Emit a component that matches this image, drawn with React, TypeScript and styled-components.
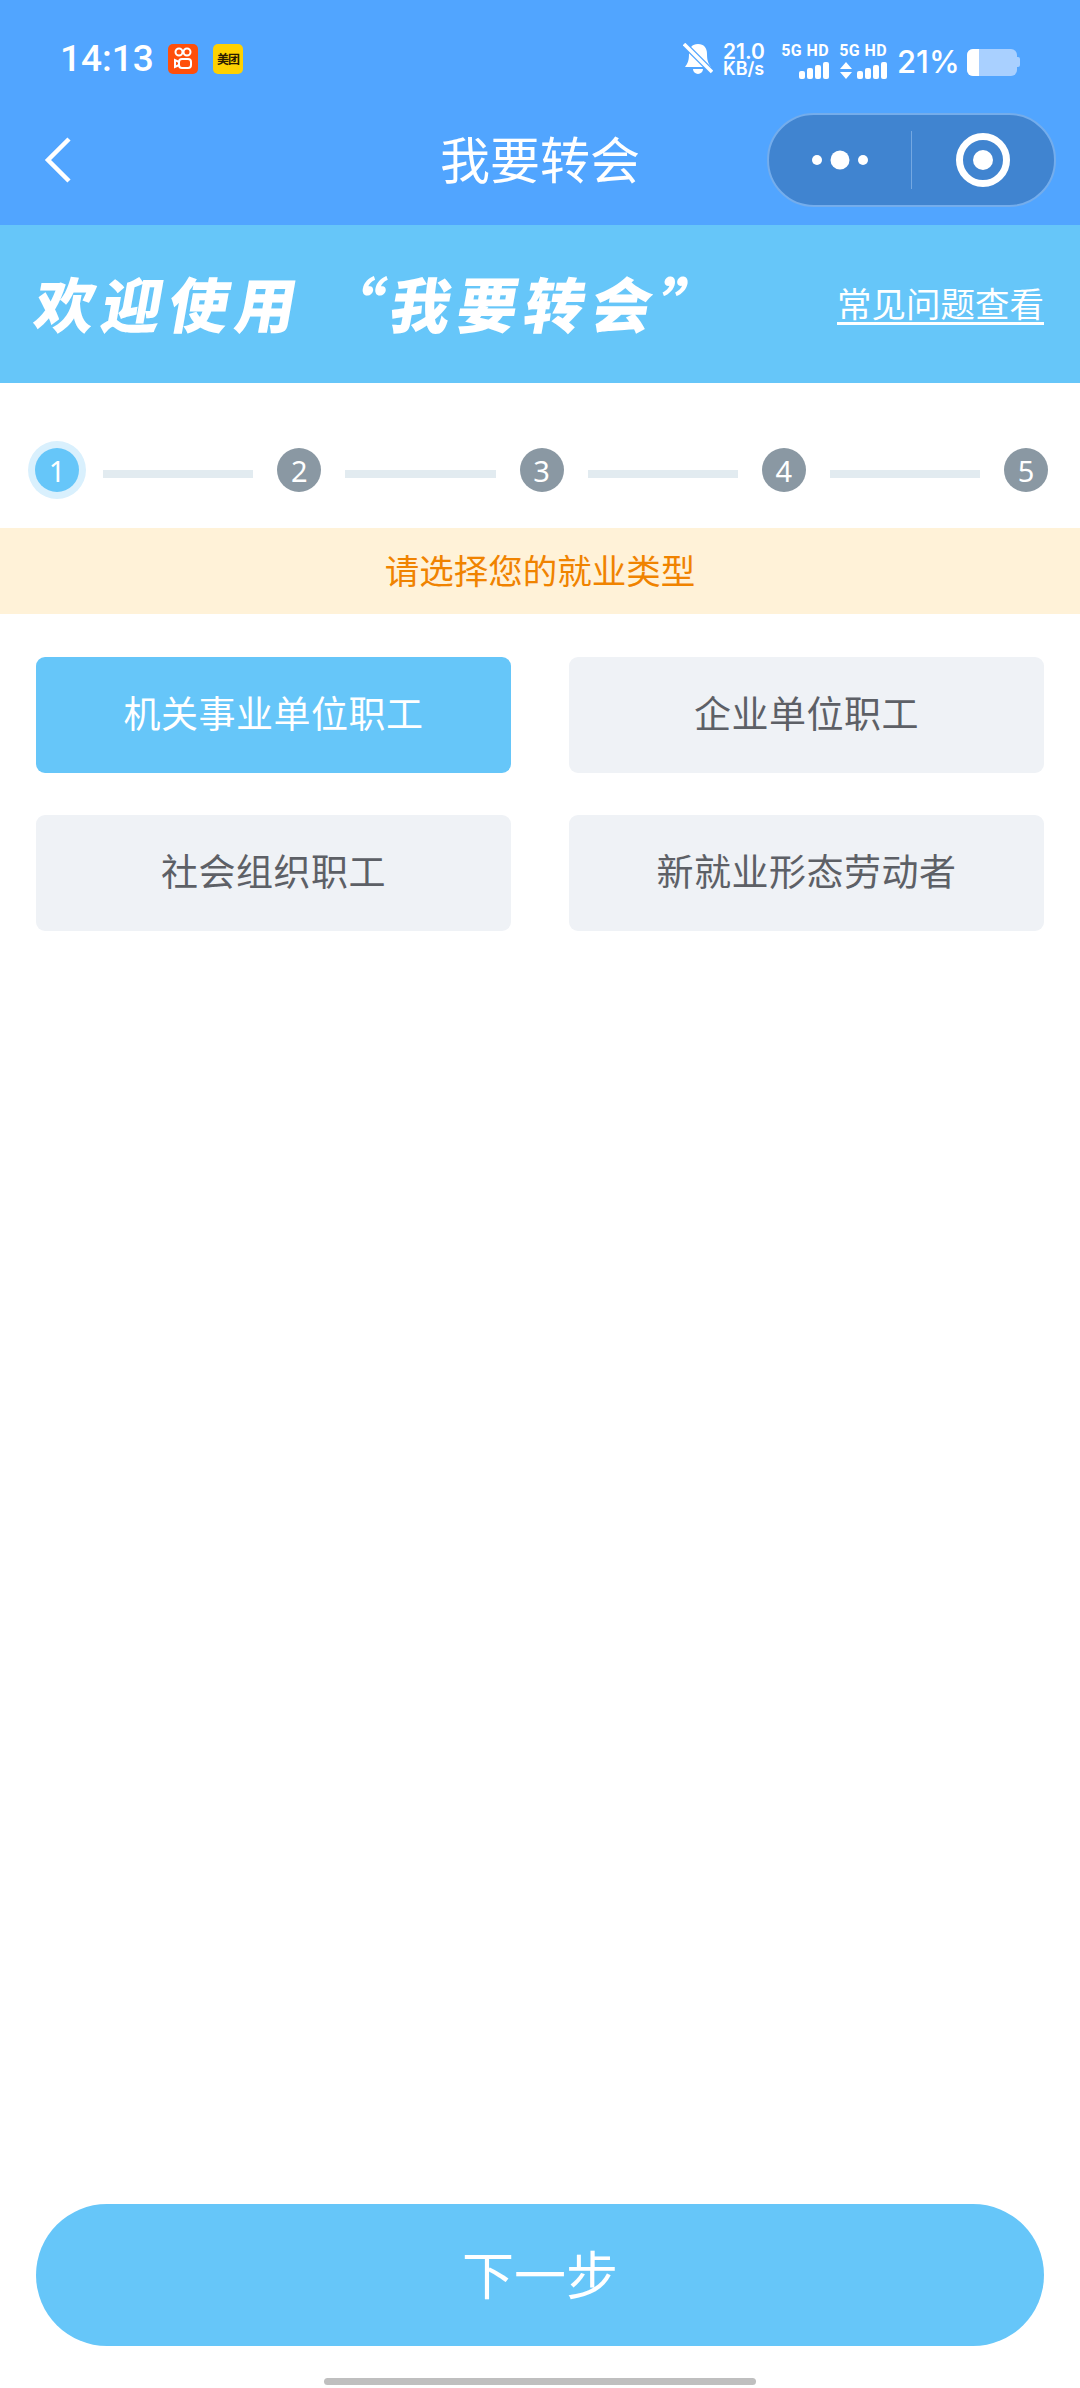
import { Fragment } from 'react'
import { createGlobalStyle, styled } from 'styled-components'

const GlobalStyle = createGlobalStyle`
  html, body {
    margin: 0;
    padding: 0;
    background: #fff;
  }
  * {
    box-sizing: border-box;
  }
`

const Page = styled.div`
  width: 1080px;
  height: 2388px;
  display: flex;
  flex-direction: column;
  background: #fff;
  overflow: hidden;
  font-family: 'Noto Sans CJK SC', 'Noto Sans', sans-serif;
`

const Header = styled.header`
  height: 225px;
  background: #51a5ff;
  color: #fff;
`

const StatusBar = styled.div`
  height: 113px;
  padding: 42px 60px 0;
  display: flex;
  justify-content: space-between;
  align-items: flex-start;
`

const StatusGroup = styled.div`
  display: flex;
  align-items: center;
  height: 34px;
`

const Clock = styled.span`
  width: 108px;
  font-family: 'Roboto', sans-serif;
  font-size: 37px;
  font-weight: 500;
  line-height: 34px;
`

const AppBadge = styled.span<{ $bg: string }>`
  width: 30px;
  height: 30px;
  margin-right: 15px;
  border-radius: 5px;
  background: ${(p) => p.$bg};
  display: flex;
  align-items: center;
  justify-content: center;
  color: #2b1a00;
  font-size: 12px;
  font-weight: 700;
  line-height: 1;
  letter-spacing: -1px;
  white-space: nowrap;
`

const Speed = styled.div`
  width: 58px;
  margin: 2px 0 0 10px;
  display: flex;
  flex-direction: column;
  font-family: 'Inter', sans-serif;
  font-weight: 600;
  font-size: 21px;
  line-height: 18px;

  small {
    font-size: 18px;
    line-height: 16px;
  }
`

const Network = styled.div`
  width: 58px;
  margin-top: 4px;
  display: flex;
  flex-direction: column;
  align-items: flex-end;
  padding-right: 10px;
  gap: 4px;
  font-family: 'Roboto', sans-serif;
  font-size: 16px;
  line-height: 14px;
  font-weight: 700;
  letter-spacing: 0.4px;
  white-space: nowrap;
`

const Percent = styled.span`
  width: 70px;
  font-family: 'Inter', sans-serif;
  font-size: 31px;
  font-weight: 500;
  line-height: 34px;
  margin-top: 6px;
`

const Battery = styled.div`
  width: 50px;
  height: 27px;
  margin-top: 6px;
  border-radius: 6px;
  background: #a9d0ff;
  overflow: hidden;

  &::before {
    content: '';
    display: block;
    width: 12px;
    height: 100%;
    background: #fff;
  }
`

const BatteryCap = styled.span`
  width: 3px;
  height: 10px;
  margin-top: 6px;
  border-radius: 0 2px 2px 0;
  background: #a9d0ff;
`

const NavBar = styled.div`
  height: 112px;
  padding: 0 24px 18px 44px;
  display: flex;
  align-items: center;
  justify-content: space-between;
  position: relative;
`

const NavTitle = styled.h1`
  position: absolute;
  left: 0;
  right: 0;
  top: 17px;
  margin: 0;
  text-align: center;
  font-size: 50px;
  font-weight: 400;
  line-height: 54px;
`

const Capsule = styled.div`
  width: 289px;
  height: 94px;
  border-radius: 47px;
  background: #4084d0;
  border: 2px solid #74adec;
  display: flex;
  align-items: center;
`

const CapsuleSide = styled.div`
  flex: 1;
  display: flex;
  align-items: center;
  justify-content: center;
`

const CapsuleDivider = styled.span`
  width: 1px;
  height: 58px;
  background: #74a8e2;
`

const Banner = styled.div`
  height: 158px;
  padding: 0 36px 4px;
  background: #66c6f9;
  color: #fff;
  display: flex;
  align-items: center;
  justify-content: space-between;
`

const BannerTitle = styled.div`
  font-size: 60px;
  font-weight: 900;
  letter-spacing: 7px;
  line-height: 1;
  white-space: nowrap;
  transform: skewX(-10deg);
`

const FaqLink = styled.a`
  font-size: 34.5px;
  color: #fff;
  text-decoration: underline;
  text-underline-offset: 5px;
  white-space: nowrap;
`

const Stepper = styled.div`
  height: 145px;
  padding: 65px 32px 0 35px;
  display: flex;
  align-items: flex-start;
  gap: 24px;
`

const StepDot = styled.span<{ $active?: boolean }>`
  flex: none;
  width: 44px;
  height: 44px;
  border-radius: 50%;
  background: ${(p) => (p.$active ? '#66c6f9' : '#8a98a3')};
  box-shadow: ${(p) => (p.$active ? '0 0 0 7px #d9f0fd' : 'none')};
  color: #fff;
  display: flex;
  align-items: center;
  justify-content: center;
  font-family: 'Noto Sans', sans-serif;
  font-size: 29px;
  font-weight: 400;
  line-height: 1;
`

const StepLine = styled.span`
  flex: 1;
  height: 8px;
  margin-top: 22px;
  background: #e2ebf0;
`

const Notice = styled.div`
  height: 86px;
  padding-bottom: 4px;
  background: #fff2d8;
  color: #f08300;
  font-size: 34.5px;
  display: flex;
  align-items: center;
  justify-content: center;
`

const OptionGrid = styled.div`
  padding: 43px 36px 0;
  display: grid;
  grid-template-columns: 475px 475px;
  justify-content: space-between;
  grid-auto-rows: 116px;
  row-gap: 42px;
`

const Option = styled.button<{ $selected?: boolean }>`
  border: 0;
  padding: 0 0 6px;
  border-radius: 9px;
  background: ${(p) => (p.$selected ? '#66c6f9' : '#eff2f6')};
  color: ${(p) => (p.$selected ? '#fff' : '#5d6066')};
  font-family: inherit;
  font-size: 37px;
  letter-spacing: 0.5px;
`

const Footer = styled.footer`
  margin-top: auto;
  padding: 0 36px;
  display: flex;
  flex-direction: column;
  align-items: center;
`

const NextButton = styled.button`
  width: 1008px;
  height: 142px;
  padding: 0 0 6px;
  border: 0;
  border-radius: 71px;
  background: #66c6f9;
  color: #fff;
  font-family: inherit;
  font-size: 52px;
  font-weight: 400;
`

const HomeBar = styled.div`
  width: 432px;
  height: 7px;
  margin: 32px 0 3px;
  border-radius: 4px;
  background: #bfbfbf;
`

const steps = [1, 2, 3, 4, 5]
const options = ['机关事业单位职工', '企业单位职工', '社会组织职工', '新就业形态劳动者']

function SignalBars({ width }: { width: number }) {
  const bars = [
    { x: 0, h: 8 },
    { x: 8, h: 11 },
    { x: 16, h: 14 },
    { x: 24, h: 17 },
  ]
  return (
    <svg width={width} height={17} viewBox={`${30 - width} 0 ${width} 17`} fill="#fff">
      {width > 32 && <path d="M-11 0 -5 7H-17ZM-11 17 -5 10H-17Z" />}
      {bars.map((b) => (
        <rect key={b.x} x={b.x} y={17 - b.h} width={6} height={b.h} rx={2} />
      ))}
    </svg>
  )
}

export default function App() {
  return (
    <Page>
      <GlobalStyle />
      <Header>
        <StatusBar>
          <StatusGroup>
            <Clock>14:13</Clock>
            <AppBadge $bg="#ff4f0b">
              <svg width="20" height="24" viewBox="0 0 20 24" fill="none" stroke="#fff" strokeWidth="2">
                <circle cx="6" cy="5" r="3.5" />
                <circle cx="14" cy="5" r="3.5" />
                <rect x="6" y="12" width="12" height="9" rx="3" />
                <path d="M6 15 2 13V20L6 18" />
              </svg>
            </AppBadge>
            <AppBadge $bg="#ffd100">美团</AppBadge>
          </StatusGroup>
          <StatusGroup>
            <svg width="30" height="32" viewBox="0 0 30 32" fill="#fff">
              <path d="M15 1c6 0 9 4 9 10 0 6 1 9 4 13H2c3-4 4-7 4-13C6 5 9 1 15 1ZM10 26h10a5 5 0 0 1-10 0Z" />
              <path d="M0 0 30 30" stroke="#51a5ff" strokeWidth="6" />
              <path d="M1 1 29 29" stroke="#fff" strokeWidth="3.5" />
            </svg>
            <Speed>
              21.0
              <small>KB/s</small>
            </Speed>
            <Network>
              5G HD
              <SignalBars width={30} />
            </Network>
            <Network>
              5G HD
              <SignalBars width={47} />
            </Network>
            <Percent>21%</Percent>
            <Battery />
            <BatteryCap />
          </StatusGroup>
        </StatusBar>
        <NavBar>
          <svg width="28" height="48" viewBox="0 0 28 48" fill="none" stroke="#fff" strokeWidth="4.5">
            <path d="M25 3 4 24 25 45" />
          </svg>
          <NavTitle>我要转会</NavTitle>
          <Capsule>
            <CapsuleSide>
              <svg width="66" height="20" viewBox="0 0 66 20" fill="#fff">
                <circle cx="10" cy="10" r="5" />
                <circle cx="33" cy="10" r="9.5" />
                <circle cx="56" cy="10" r="5" />
              </svg>
            </CapsuleSide>
            <CapsuleDivider />
            <CapsuleSide>
              <svg width="56" height="56" viewBox="0 0 56 56" fill="none">
                <circle cx="28" cy="28" r="23.5" stroke="#fff" strokeWidth="7" />
                <circle cx="28" cy="28" r="10" fill="#fff" />
              </svg>
            </CapsuleSide>
          </Capsule>
        </NavBar>
      </Header>
      <Banner>
        <BannerTitle>欢迎使用 “我要转会”</BannerTitle>
        <FaqLink>常见问题查看</FaqLink>
      </Banner>
      <Stepper>
        {steps.map((n, i) => (
          <Fragment key={n}>
            <StepDot $active={n === 1}>{n}</StepDot>
            {i < steps.length - 1 && <StepLine />}
          </Fragment>
        ))}
      </Stepper>
      <Notice>请选择您的就业类型</Notice>
      <OptionGrid>
        {options.map((o, i) => (
          <Option key={o} $selected={i === 0}>{o}</Option>
        ))}
      </OptionGrid>
      <Footer>
        <NextButton>下一步</NextButton>
        <HomeBar />
      </Footer>
    </Page>
  )
}
